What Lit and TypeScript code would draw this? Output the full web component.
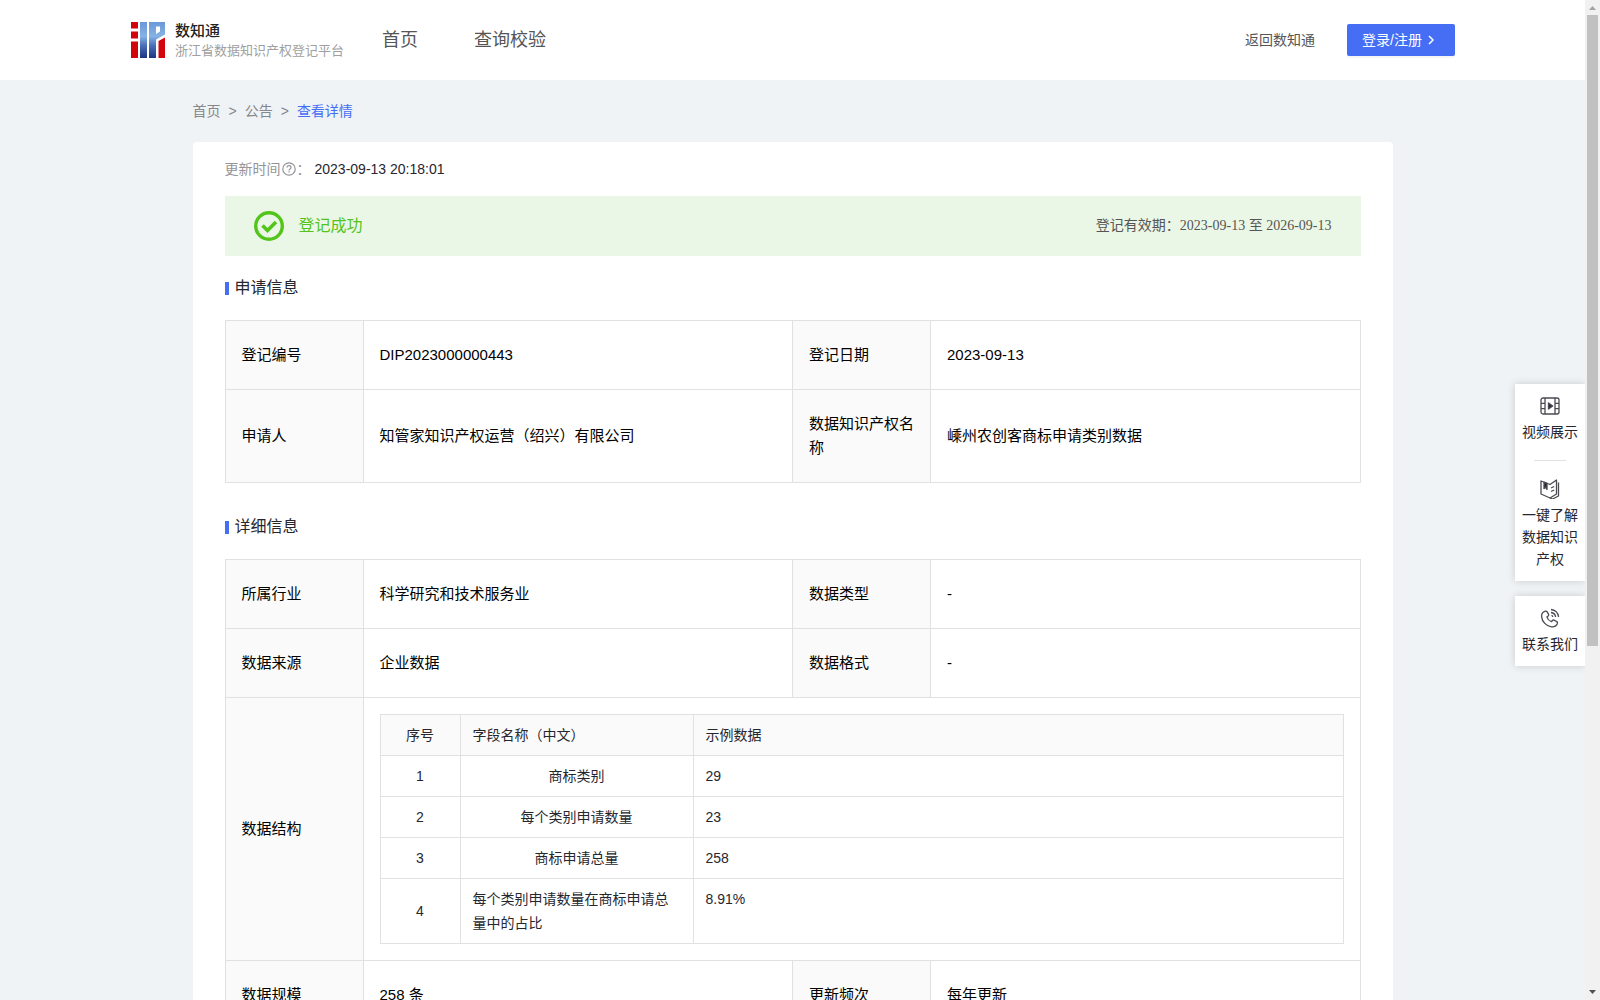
import { LitElement, html, css, svg } from "lit";
import { customElement, state } from "lit/decorators.js";

const applyRows = [
  ["登记编号", "DIP2023000000443", "登记日期", "2023-09-13"],
  ["申请人", "知管家知识产权运营（绍兴）有限公司", "数据知识产权名称", "嵊州农创客商标申请类别数据"],
];

const detailRows = [
  ["所属行业", "科学研究和技术服务业", "数据类型", "-"],
  ["数据来源", "企业数据", "数据格式", "-"],
];

const fields = [
  { name: "商标类别", sample: "29" },
  { name: "每个类别申请数量", sample: "23" },
  { name: "商标申请总量", sample: "258" },
  { name: "每个类别申请数量在商标申请总量中的占比", sample: "8.91%" },
];

const logoIcon = svg`
  <defs>
    <linearGradient id="blue" x1="0" y1="0" x2="0" y2="1">
      <stop offset="0" stop-color="#6b98d8"/>
      <stop offset="0.4" stop-color="#86b2e4"/>
      <stop offset="0.65" stop-color="#4a70b8"/>
      <stop offset="1" stop-color="#1f3480"/>
    </linearGradient>
  </defs>
  <path fill="#d2040c" d="M0 0h7v6.500H0zM0 9.500h7v7H0zM0 19.500h7V36H0zM27.500 19l6.500-3.500V36h-6.500z"/>
  <path fill="url(#blue)" d="M9 0h7v36H9zM18 0h16v12.500l-9 5V36h-7zM25 4.500v7.500l4-2.500v-5z" fill-rule="evenodd"/>`;

const filmIcon = svg`
  <rect x="1" y="2" width="18" height="16" rx="2"/>
  <path d="M5 2v16M15 2v16M1 7.300h4M1 12.700h4M15 7.300h4M15 12.700h4"/>
  <path d="M8.500 7v6l4.200-3z" fill="#26262e"/>`;

const bookIcon = svg`
  <path d="M1 2l9 3.500L16.500 1v14L10 19l-9-4z"/>
  <path d="M18.500 3.500v13.500l-6 3L10 19"/>
  <path d="M4 3.200v6.300l1.500-1.300L7 10.500V4.400z" fill="#26262e"/>
  <path d="M11 9l3.200-1.500M11 12.500l3.200-1.500"/>`;

const phoneIcon = svg`
  <path d="M5.300 3.200C3 4 1.400 6 1.600 8.600c.4 5 4.800 9.600 9.800 10.200 2.800.3 5-1 6-3.400.3-.8 0-1.400-.6-1.800l-2.600-1.400c-.6-.3-1.300-.2-1.700.3l-1 1.200c-2-.7-3.900-2.600-4.600-4.600l1.300-1c.5-.5.7-1.100.4-1.700L7.200 3.900c-.4-.8-1-1-1.900-.7z"/>
  <path d="M11 1.500c4 .4 7.200 3.300 7.600 7.500M11 4.500c2.500.3 4.300 2 4.600 4.500M11.500 7.300c.8.200 1.200.7 1.400 1.500"/>`;

@customElement("app-root")
export class AppRoot extends LitElement {
  @state() private current = "查看详情";

  static styles = css`
    :host {
      display: flex;
      height: 100vh;
      overflow: hidden;
      background: #eff3f6;
      color: #26262e;
      font: 14px/24px "Liberation Sans", "Noto Sans CJK SC", sans-serif;
    }
    * { box-sizing: border-box; }
    a { color: inherit; text-decoration: none; }
    button { font: inherit; border: 0; cursor: pointer; }
    svg { display: block; flex: none; }
    .page { flex: 1; min-width: 0; overflow: auto; scrollbar-width: none; }
    .header {
      display: flex;
      align-items: center;
      height: 80px;
      padding: 0 130px;
      background: #fff;
    }
    .brand { display: flex; align-items: center; gap: 10px; }
    .brand-text { display: flex; flex-direction: column; padding-top: 2px; white-space: nowrap; }
    .brand-name { font-size: 15px; line-height: 20px; font-weight: 500; color: #222; }
    .brand-sub { font-size: 13px; line-height: 20px; color: #a0a0a0; }
    .nav { display: flex; gap: 56px; margin-left: 38px; font-size: 18px; color: #555; }
    .actions { display: flex; align-items: center; gap: 32px; margin-left: auto; color: #555; }
    .login {
      display: flex;
      align-items: center;
      gap: 4px;
      height: 32px;
      padding: 0 19px 0 15px;
      border-radius: 2px;
      background: #456ef5;
      color: #fff;
      box-shadow: 0 2px 0 rgba(0, 0, 0, 0.04);
    }
    .body { width: 1200px; max-width: 100%; margin: 0 auto; }
    .crumbs { display: flex; align-items: center; gap: 8px; height: 62px; color: #86868b; }
    .crumbs .here { color: #456ef5; }
    .card { padding: 0 32px 32px; border-radius: 4px; background: #fff; }
    .updated { display: flex; align-items: center; gap: 4px; height: 54px; }
    .updated .label { display: flex; align-items: center; gap: 1px; color: #949499; }
    .banner {
      display: flex;
      align-items: center;
      justify-content: space-between;
      height: 60px;
      padding: 0 29px;
      background: #ebf7e6;
    }
    .status { display: flex; align-items: center; gap: 15px; font-size: 16px; color: #52c41a; }
    .valid { font-family: "Liberation Serif", "Noto Sans CJK SC", serif; color: #555; }
    .title {
      display: flex;
      align-items: center;
      gap: 6px;
      height: 64px;
      margin: 0;
      font-size: 16px;
      font-weight: 400;
    }
    .title::before { content: ""; width: 4px; height: 13px; background: #456ef5; }
    .second { margin-top: 12px; }
    table { width: 100%; border-collapse: collapse; table-layout: fixed; }
    th, td { border: 1px solid #e1e1e1; font-weight: 400; text-align: left; }
    .info { font-size: 15px; color: #000; }
    .info .key { width: 138px; }
    .info th, .info td { padding: 22px 16px; }
    .info th { background: #fafafa; }
    .info .holder { padding: 16px; }
    .info .fields { font-size: 14px; color: #26262e; }
    .fields .no { width: 80px; }
    .fields .name { width: 233px; }
    .info .fields th, .info .fields td { padding: 8px 12px; vertical-align: top; }
    .info .fields .num { text-align: center; vertical-align: middle; }
    .wrap { display: flex; justify-content: center; }
    .side {
      position: absolute;
      top: 384px;
      right: 15px;
      display: flex;
      flex-direction: column;
      gap: 15px;
      width: 70px;
      line-height: 22px;
    }
    .panel {
      display: flex;
      flex-direction: column;
      align-items: center;
      padding: 12px 7px 11px;
      background: #fff;
      box-shadow: 0 0 8px rgba(0, 0, 0, 0.16);
      clip-path: inset(-12px 0 -12px -12px);
    }
    .tool {
      display: flex;
      flex-direction: column;
      align-items: center;
      gap: 5px;
      padding: 0;
      background: none;
      color: inherit;
      text-align: center;
    }
    .tool svg { fill: none; stroke: #4a4a52; stroke-width: 1.3; stroke-linejoin: round; }
    .rule { width: 32px; height: 1px; margin: 17px 0 18px; background: #e1e1e1; }
    .scroll {
      display: flex;
      flex-direction: column;
      align-items: center;
      justify-content: space-between;
      width: 15px;
      background: #f1f1f1;
    }
    .thumb { width: 11px; height: 63.1%; margin-bottom: auto; background: #c1c1c1; }
  `;

  private infoRow(r: string[]) {
    return html`<tr><th scope="row">${r[0]}</th><td>${r[1]}</td><th scope="row">${r[2]}</th><td>${r[3]}</td></tr>`;
  }

  private cols() {
    return html`<colgroup><col class="key"><col><col class="key"><col></colgroup>`;
  }

  private tool(icon: unknown, text: string) {
    return html`<button class="tool" type="button">
      <svg width="20" height="20" viewBox="0 0 20 20" aria-hidden="true">${icon}</svg>
      <span>${text}</span>
    </button>`;
  }

  render() {
    return html`
      <div class="page">
        <header class="header">
          <a class="brand" href="#">
            <svg width="35" height="36" viewBox="-1 0 35 36" aria-hidden="true">${logoIcon}</svg>
            <span class="brand-text">
              <span class="brand-name">数知通</span>
              <span class="brand-sub">浙江省数据知识产权登记平台</span>
            </span>
          </a>
          <nav class="nav"><a href="#">首页</a><a href="#">查询校验</a></nav>
          <div class="actions">
            <a href="#">返回数知通</a>
            <button class="login" type="button">
              登录/注册
              <svg width="10" height="10" viewBox="0 0 10 10" fill="none" stroke="#fff" stroke-width="1.500" aria-hidden="true"><path d="M3 1l4 4-4 4"/></svg>
            </button>
          </div>
        </header>
        <main class="body">
          <nav class="crumbs">
            <a href="#">首页</a><span>&gt;</span><a href="#">公告</a><span>&gt;</span><span class="here">${this.current}</span>
          </nav>
          <article class="card">
            <div class="updated">
              <span class="label">更新时间
                <svg width="14" height="14" viewBox="0 0 14 14" fill="none" stroke="#949499" stroke-width="1.200" aria-hidden="true">
                  <circle cx="7" cy="7" r="6.200"/>
                  <path d="M5 5.600C5 4.300 5.900 3.700 7 3.700s2 .7 2 1.800c0 1.400-2 1.400-2 2.900M7 9.300v1.300"/>
                </svg>：</span>
              <time>2023-09-13 20:18:01</time>
            </div>
            <section class="banner">
              <span class="status">
                <svg width="30" height="30" viewBox="0 0 30 30" fill="none" stroke="#52c41a" aria-hidden="true">
                  <circle cx="15" cy="15" r="13.300" stroke-width="3.400"/>
                  <path d="M8.500 14.500l5 5 8.500-8.500" stroke-width="3.600"/>
                </svg>
                登记成功
              </span>
              <span class="valid">登记有效期：2023-09-13 至 2026-09-13</span>
            </section>
            <h2 class="title">申请信息</h2>
            <table class="info">${this.cols()}<tbody>${applyRows.map((r) => this.infoRow(r))}</tbody></table>
            <h2 class="title second">详细信息</h2>
            <table class="info">
              ${this.cols()}
              <tbody>
                ${detailRows.map((r) => this.infoRow(r))}
                <tr>
                  <th scope="row">数据结构</th>
                  <td class="holder" colspan="3">
                    <table class="fields">
                      <colgroup><col class="no"><col class="name"><col></colgroup>
                      <thead><tr><th class="num">序号</th><th>字段名称（中文）</th><th>示例数据</th></tr></thead>
                      <tbody>
                        ${fields.map((f, i) => html`<tr>
                          <td class="num">${i + 1}</td>
                          <td><div class="wrap">${f.name}</div></td>
                          <td>${f.sample}</td>
                        </tr>`)}
                      </tbody>
                    </table>
                  </td>
                </tr>
                ${this.infoRow(["数据规模", "258 条", "更新频次", "每年更新"])}
              </tbody>
            </table>
          </article>
        </main>
      </div>
      <aside class="side">
        <div class="panel">
          ${this.tool(filmIcon, "视频展示")}
          <div class="rule"></div>
          ${this.tool(bookIcon, "一键了解数据知识产权")}
        </div>
        <div class="panel">${this.tool(phoneIcon, "联系我们")}</div>
      </aside>
      <div class="scroll" aria-hidden="true">
        <svg width="15" height="15" viewBox="0 0 15 15"><path d="M4 10l3.500-4 3.500 4z" fill="#a3a3a3"/></svg>
        <div class="thumb"></div>
        <svg width="15" height="15" viewBox="0 0 15 15"><path d="M4 5l3.500 4L11 5z" fill="#505050"/></svg>
      </div>
    `;
  }
}
